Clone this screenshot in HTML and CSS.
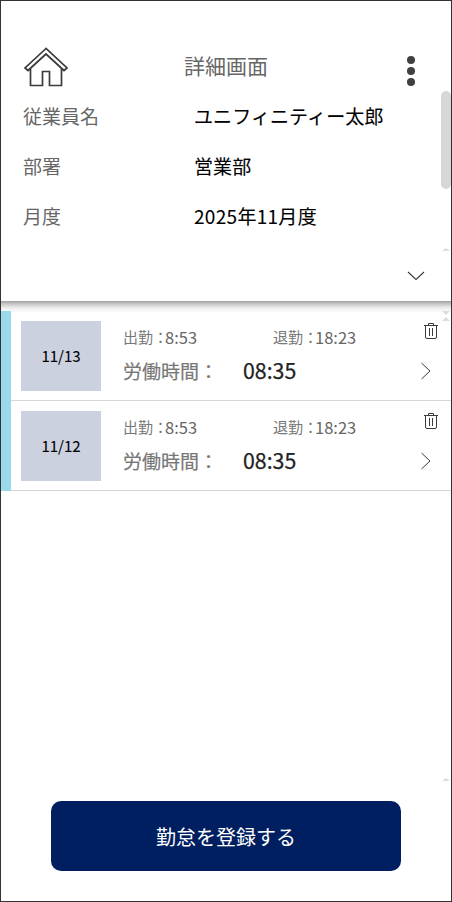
FILE: index.html
```html
<!DOCTYPE html>
<html lang="ja">
<head>
<meta charset="utf-8">
<title>詳細画面</title>
<link rel="stylesheet" href="styles.css">
</head>
<body>
<main class="screen">
  <header class="header">
    <svg class="home" width="46" height="42" viewBox="0 0 46 42"><path d="M6.500 22V39.500H18.500V25.500H25.500V39.500H37.500V22M22 2.500L1 22L4 24.500L22 8L40 24.500L43 22Z"/></svg>
    <h1 class="title">詳細画面</h1>
    <svg class="more" width="10" height="32" viewBox="0 0 10 32"><circle cx="5" cy="5" r="4"/><circle cx="5" cy="16" r="4"/><circle cx="5" cy="27" r="4"/></svg>
  </header>
  <section class="info">
    <dl class="fields">
      <div class="field"><dt>従業員名</dt><dd>ユニフィニティー太郎</dd></div>
      <div class="field"><dt>部署</dt><dd>営業部</dd></div>
      <div class="field"><dt>月度</dt><dd class="month">2025年11月度</dd></div>
    </dl>
    <div class="thumb"></div>
    <svg class="mark mark-info" width="8" height="3" viewBox="0 0 8 3"><path d="M0 3L4 0L8 3Z"/></svg>
    <div class="expand"><svg width="18" height="10" viewBox="0 0 18 10"><path d="M1 1L9 8.500L17 1"/></svg></div>
  </section>
  <section class="list">
    <svg class="mark mark-top" width="8" height="10" viewBox="0 0 8 10"><path d="M0 0H8L4 4ZM0 10L4 6L8 10Z"/></svg>
    <article class="row">
      <div class="date">11/13</div>
      <div class="detail">
        <div class="times"><span class="time"><span class="label">出勤：</span><span class="clock">8:53</span></span><span class="time"><span class="label">退勤：</span><span class="clock">18:23</span></span></div>
        <div class="total"><span class="total-label">労働時間：</span><span class="hours">08:35</span></div>
      </div>
      <div class="actions">
        <svg class="trash" width="16" height="17" viewBox="0 0 16 17"><path d="M1 3.500H15M5.500 3V1.500H10.500V3M2.500 4V15Q2.500 16.500 4 16.500H12Q13.500 16.500 13.500 15V4M6.500 6V14M9.500 6V14"/></svg>
        <svg class="go" width="11" height="18" viewBox="0 0 11 18"><path d="M1.500 1L10 9L1.500 17"/></svg>
      </div>
    </article>
    <article class="row">
      <div class="date">11/12</div>
      <div class="detail">
        <div class="times"><span class="time"><span class="label">出勤：</span><span class="clock">8:53</span></span><span class="time"><span class="label">退勤：</span><span class="clock">18:23</span></span></div>
        <div class="total"><span class="total-label">労働時間：</span><span class="hours">08:35</span></div>
      </div>
      <div class="actions">
        <svg class="trash" width="16" height="17" viewBox="0 0 16 17"><path d="M1 3.500H15M5.500 3V1.500H10.500V3M2.500 4V15Q2.500 16.500 4 16.500H12Q13.500 16.500 13.500 15V4M6.500 6V14M9.500 6V14"/></svg>
        <svg class="go" width="11" height="18" viewBox="0 0 11 18"><path d="M1.500 1L10 9L1.500 17"/></svg>
      </div>
    </article>
    <svg class="mark mark-end" width="8" height="3" viewBox="0 0 8 3"><path d="M0 3L4 0L8 3Z"/></svg>
  </section>
  <footer class="footer"><button class="register">勤怠を登録する</button></footer>
</main>
</body>
</html>
```
FILE: styles.css
```css
* { box-sizing: border-box; }
body { margin: 0; font-family: "Noto Sans CJK JP", sans-serif; }
.screen { width: 452px; height: 902px; border: 1px solid #333; background: #fff; display: flex; flex-direction: column; overflow: hidden; }
.header { height: 90px; flex: none; padding: 45px 35px 0 23px; display: grid; grid-template-columns: 46px 1fr 10px; align-items: start; }
.home, .expand svg, .trash, .go { display: block; fill: none; stroke: #3b3b3b; }
.home { stroke-width: 1.7; }
.title { margin: 4px 0 0 114px; font-size: 21px; line-height: 30px; font-weight: 400; color: #666; }
.more { display: block; margin-top: 9px; fill: #404040; }
.info { position: relative; height: 210px; flex: none; display: flex; flex-direction: column; }
.fields { margin: 0; padding-left: 22px; }
.field { display: grid; grid-template-columns: 171px 1fr; height: 50px; line-height: 50px; font-size: 19px; }
.field dt { color: #666; }
.field dd { margin: 0; color: #000; letter-spacing: 0.1px; -webkit-text-stroke: 0.1px #000; }
.field .month { letter-spacing: 0.3px; }
.thumb { position: absolute; right: 0; top: 0; width: 10px; height: 98px; border-radius: 5px; background: #d7d7d7; }
.mark { position: absolute; right: 1px; fill: #ddd; }
.mark-info { top: 157px; }
.expand { padding: 30px 26px 0 0; display: flex; justify-content: flex-end; }
.expand svg { stroke-width: 1.1; }
.list { position: relative; height: 480px; flex: none; padding-top: 10px; background: linear-gradient(#a0a0a0, #c8c8c8 3px, #eee 7px, #fff 12px) top / 100% 12px no-repeat; }
.mark-top { top: 10px; }
.mark-end { top: 477px; }
.row { height: 90px; display: flex; border-left: 10px solid #9ad9ea; box-shadow: inset 0 -1px #d5d5d5; padding: 10px 12px 10px 10px; }
.date { width: 80px; height: 70px; flex: none; background: #ccd1e0; line-height: 70px; text-align: center; font-size: 15px; color: #000; -webkit-text-stroke: 0.1px #000; }
.detail { flex: 1; padding-left: 22px; white-space: nowrap; }
.times { display: grid; grid-template-columns: 150px 1fr; height: 31px; line-height: 31px; }
.time { display: flex; }
.label { width: 42px; flex: none; font-size: 15px; color: #777; }
.clock { padding-top: 1px; font-size: 16.500px; color: #666; }
.total { display: flex; line-height: 37px; }
.total-label { width: 120px; font-size: 19px; color: #777; -webkit-text-stroke: 0.2px #777; }
.hours { font-size: 21.300px; line-height: 36px; color: #222; -webkit-text-stroke: 0.25px #222; }
.actions { width: 16px; }
.trash { margin-top: 1px; }
.go { margin: 23px 0 0 -3px; }
.footer { height: 120px; padding: 20px 50px 0; }
.register { width: 350px; height: 70px; border: 0; padding: 1px 0 0; border-radius: 10px; background: #001f60; color: #fff; font: 400 20px/69px "Noto Sans CJK JP", sans-serif; }
```
